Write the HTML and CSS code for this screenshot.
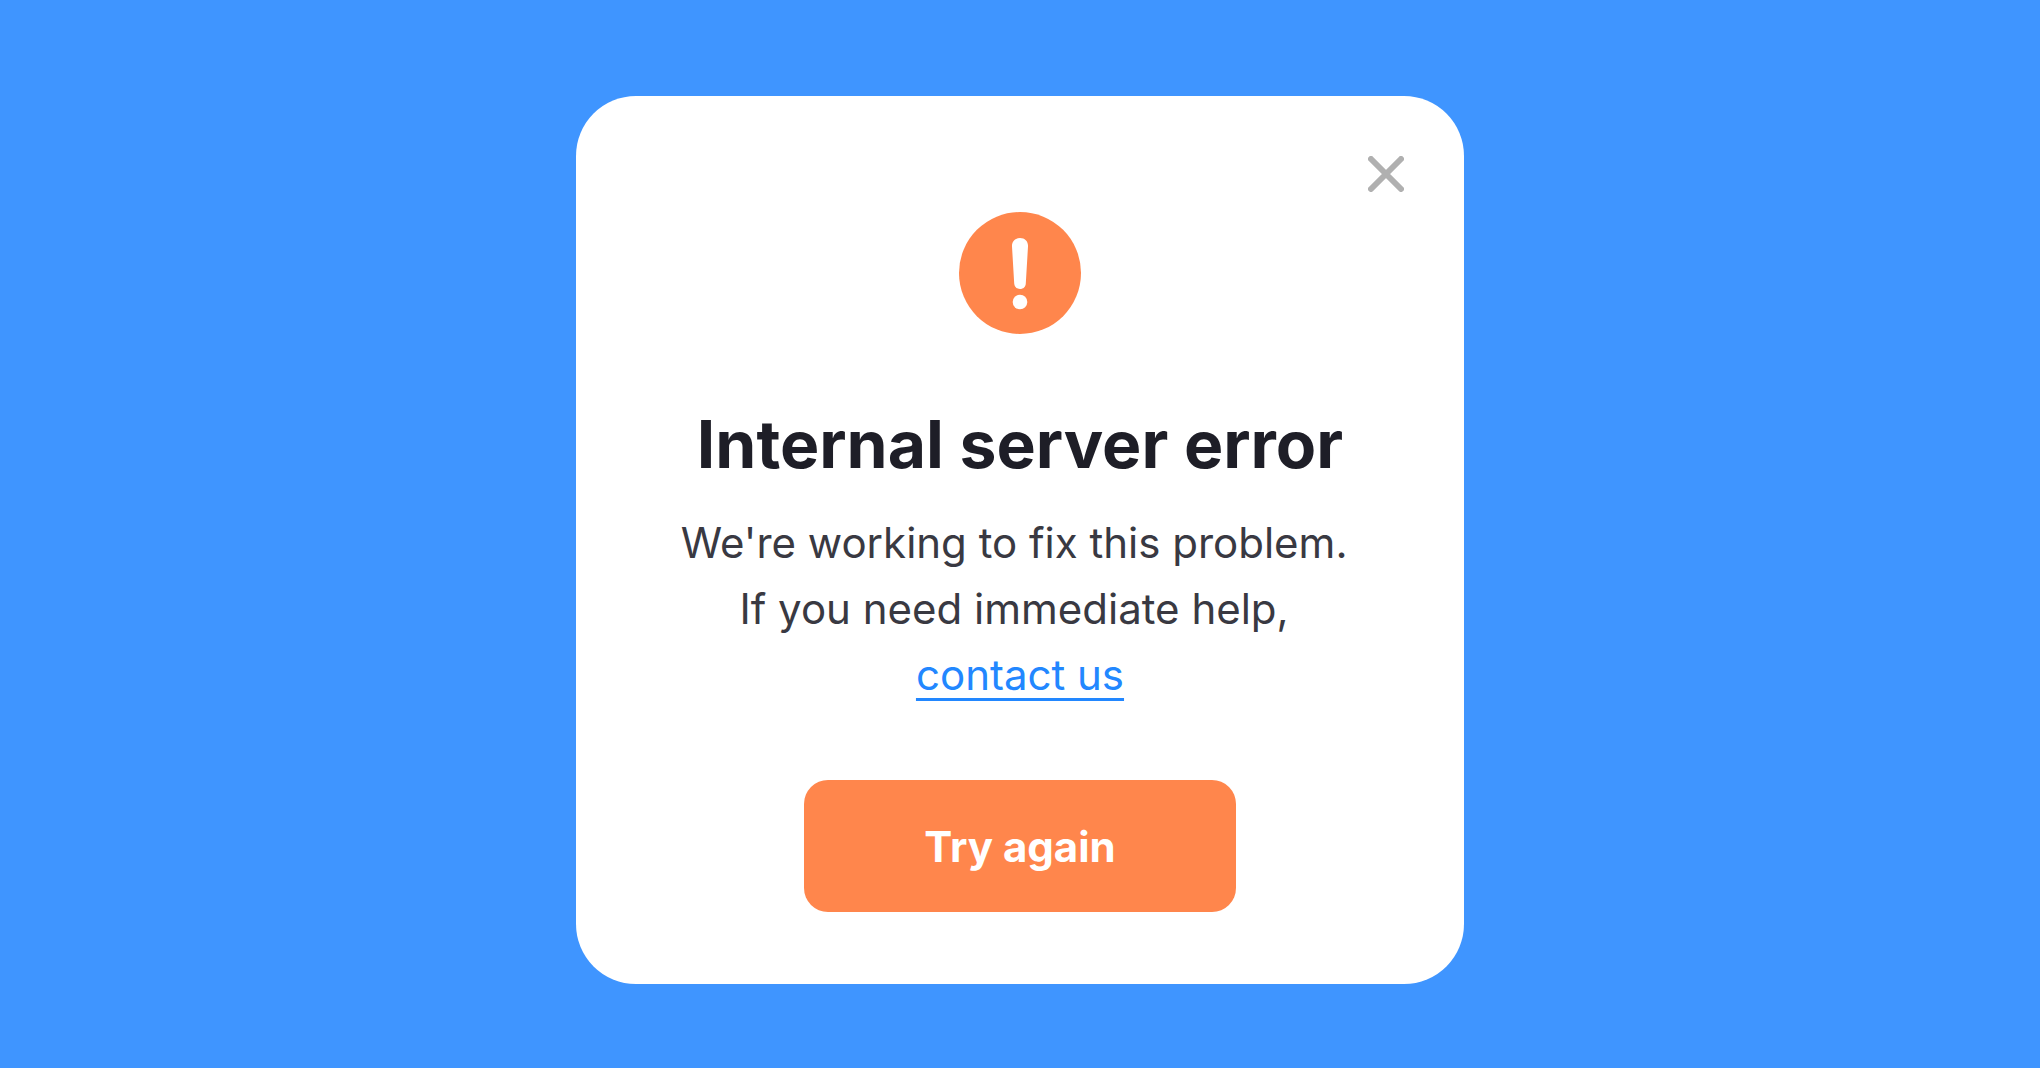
FILE: index.html
```html
<!DOCTYPE html>
<html lang="en">
<head>
  <meta charset="UTF-8">
  <meta name="viewport" content="width=device-width, initial-scale=1.0">
  <title>Internal server error</title>
  <link rel="stylesheet" href="styles.css">
</head>
<body>

  <main class="page">
    <section class="modal" role="alertdialog" aria-labelledby="title" aria-describedby="message">
      <button type="button" class="close" aria-label="Close">
        <svg viewBox="0 0 36 36" aria-hidden="true">
          <path d="M3 3 L33 33 M33 3 L3 33"/>
        </svg>
      </button>

      <svg class="icon" viewBox="0 0 122 122" aria-hidden="true">
        <circle class="icon-bg" cx="61" cy="61" r="61"/>
        <path class="icon-mark" d="M61 26 C66 26 69.300 29.500 69 34.500 L66.800 71.500 C66.600 74.800 64.400 77 61 77 C57.600 77 55.400 74.800 55.200 71.500 L53 34.500 C52.700 29.500 56 26 61 26 Z"/>
        <circle class="icon-mark" cx="61" cy="90" r="7.300"/>
      </svg>

      <h1 id="title">Internal server error</h1>
      <p id="message" class="message">We're working to fix this problem.&nbsp;<br>If you need immediate help,&nbsp;<br><a href="#contact">contact us</a></p>

      <button type="button" class="retry">Try again</button>
    </section>
  </main>

</body>
</html>
```
FILE: styles.css
```css
* {
  margin: 0;
  padding: 0;
  box-sizing: border-box;
}

body {
  font-family: Inter, 'Liberation Sans', sans-serif;
  background-color: #3f95ff;
  color: #393942;
}

.page {
  min-height: 100vh;
  padding: 96px 24px 84px;
  display: flex;
  justify-content: center;
  align-items: flex-start;
}

.modal {
  position: relative;
  width: 100%;
  max-width: 888px;
  padding: 116px 60px 72px;
  display: flex;
  flex-direction: column;
  align-items: center;
  text-align: center;
  background-color: #fff;
  border-radius: 60px;
}

button {
  border: none;
  font-family: inherit;
  cursor: pointer;
}

.close {
  position: absolute;
  top: 60px;
  right: 60px;
  width: 36px;
  height: 36px;
  background: none;
}

.close svg {
  display: block;
  fill: none;
  stroke: #b0b0b0;
  stroke-width: 6;
  stroke-linecap: round;
}

.icon {
  width: 122px;
  height: 122px;
}

.icon-bg {
  fill: #ff864c;
}

.icon-mark {
  fill: #fff;
}

h1 {
  margin-top: 72px;
  font-size: 66px;
  line-height: 76px;
  font-weight: 700;
  color: #1e1e27;
}

.message {
  margin-top: 28px;
  font-size: 42px;
  line-height: 66px;
}

.message a {
  color: #2287ff;
  text-decoration: underline;
  text-decoration-thickness: 3px;
  text-underline-offset: 8px;
}

.retry {
  width: 432px;
  max-width: 100%;
  height: 132px;
  margin-top: 72px;
  border-radius: 24px;
  background-color: #ff864c;
  color: #fff;
  font-size: 42px;
  font-weight: 700;
}
```
